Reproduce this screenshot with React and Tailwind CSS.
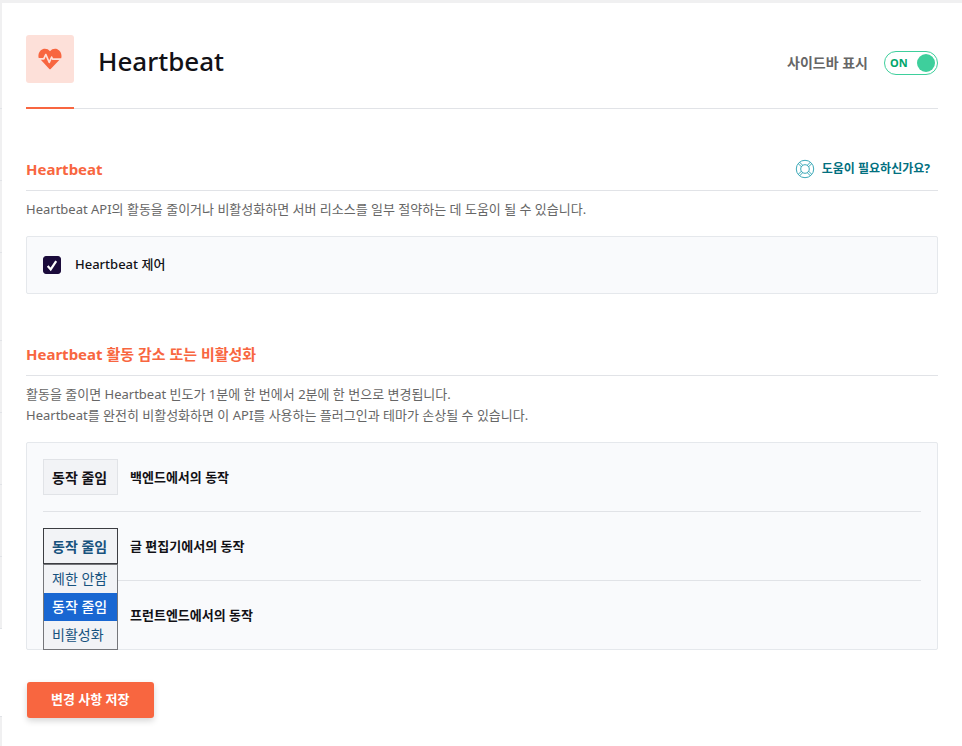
import {useState} from 'react'
import clsx from 'clsx'

const OPTIONS = ['제한 안함', '동작 줄임', '비활성화']

const BEHAVIORS = [
    {id: 'backend', label: '백엔드에서의 동작'},
    {id: 'editor', label: '글 편집기에서의 동작'},
    {id: 'frontend', label: '프런트엔드에서의 동작'},
]

function HeartbeatIcon() {
    return (
        <svg viewBox="0 0 24 22" className="h-[22px] w-6" aria-hidden="true">
            <path
                fill="#f86640"
                d="M12 3.2C10.2.9 7.2.2 4.6 1.2 1.2 2.6-.3 6.5.7 10h4.5l1.9-3.9c.3-.6 1.1-.6 1.4 0l2.7 6.1 1.8-3.5c.3-.6 1-.6 1.3 0l.8 1.6h8.1c1-3.7-.4-7.6-3.8-9.1-2.6-1-5.6-.3-7.4 2z"
            />
            <path
                fill="#f86640"
                d="M2.8 11.7h3c.4 0 .6-.2.8-.5l1.2-2.6 2.7 6.2c.3.6 1.1.6 1.4.1l1.8-3.8.4.7c.1.2.3.3.6.3h6.6L12.7 20.9c-.4.4-1 .4-1.4 0z"
            />
        </svg>
    )
}

function LifebuoyIcon() {
    return (
        <svg viewBox="0 0 20 20" className="size-5" fill="none" stroke="#3ba9b8" aria-hidden="true">
            <circle cx="10" cy="10" r="8.7"/>
            <circle cx="10" cy="10" r="4.3"/>
            <path d="M3.2 4.6l3.1 3.1M4.6 3.2l3.1 3.1M16.8 4.6l-3.1 3.1M15.4 3.2l-3.1 3.1M3.2 15.4l3.1-3.1M4.6 16.8l3.1-3.1M16.8 15.4l-3.1-3.1M15.4 16.8l-3.1-3.1"/>
        </svg>
    )
}

// Edge of the collapsed navigation, the gap is the active item
function NavEdge() {
    return (
        <div className="flex w-[2px] shrink-0 flex-col bg-white" aria-hidden="true">
            <div className="h-[106px] border-b border-[#e1e3e7] bg-[#f0f0f1]"/>
            <div className="h-[72px] border-b border-[#e1e3e7] bg-[#f0f0f1]"/>
            <div className="h-[72px] border-b border-[#e1e3e7] bg-[#f0f0f1]"/>
            <div className="h-[88px] border-b border-[#e1e3e7] bg-[#f0f0f1]"/>
            <div className="h-[72px] border-b border-[#e1e3e7] bg-[#f0f0f1]"/>
            <div className="h-[72px] border-b border-[#e1e3e7] bg-[#f0f0f1]"/>
            <div className="h-[72px] border-b border-[#e1e3e7] bg-[#f0f0f1]"/>
            <div className="h-[72px] border-b border-[#e1e3e7] bg-[#f0f0f1]"/>
            <div className="h-[87px]"/>
            <div className="grow border-t border-[#e1e3e7] bg-[#f0f0f1]"/>
        </div>
    )
}

function SectionTitle({children, action}) {
    return (
        <div className="flex h-8 items-start justify-between border-b border-[#e1e3e7]">
            <h2 className="text-[15px] leading-5 font-bold text-[#f86640]">{children}</h2>
            {action}
        </div>
    )
}

function BehaviorRow({id, label, value, open, onToggle, onChange}) {
    return (
        <div className="flex items-center gap-3 border-b border-[#e1e3e7] py-4 first:pt-0 last:border-b-0 last:pb-0">
            <div className="relative">
                <select
                    id={id}
                    value={value}
                    onMouseDown={(e) => {
                        e.preventDefault()
                        onToggle()
                    }}
                    onChange={(e) => onChange(e.target.value)}
                    className={clsx(
                        'block h-9 w-[75px] appearance-none border px-2 text-[14px] font-bold outline-none',
                        open ? 'border-[#3c3d42] bg-[#f2f3f6] text-[#17527e]' : 'border-[#e1e3e7] bg-[#f2f3f6] text-[#121116]'
                    )}
                >
                    {OPTIONS.map((option) => <option key={option}>{option}</option>)}
                </select>
                {open && (
                    <ul role="listbox" aria-label={label} className="absolute top-full left-0 z-10 w-full border border-[#75767a] bg-[#f2f3f6]">
                        {OPTIONS.map((option) => (
                            <li
                                key={option}
                                role="option"
                                aria-selected={option === value}
                                onClick={() => onChange(option)}
                                className={clsx(
                                    'h-7 px-2 text-[14px] leading-7 whitespace-nowrap',
                                    option === value ? 'bg-[#1967d2] font-medium text-white' : 'text-[#17527e]'
                                )}
                            >
                                {option}
                            </li>
                        ))}
                    </ul>
                )}
            </div>
            <label htmlFor={id} className="text-[13px] leading-5 font-bold text-[#121116]">{label}</label>
        </div>
    )
}

export default function App() {
    const [sidebar, setSidebar] = useState(true)
    const [control, setControl] = useState(true)
    const [openId, setOpenId] = useState('editor')
    const [values, setValues] = useState({backend: '동작 줄임', editor: '동작 줄임', frontend: '동작 줄임'})

    const onChange = (id, value) => {
        setValues({...values, [id]: value})
        setOpenId(null)
    }

    return (
        <div className="flex min-h-screen border-t-[3px] border-[#f0f0f1] bg-white font-['Noto_Sans','Noto_Sans_CJK_KR',sans-serif] text-[#121116]">
            <NavEdge/>
            <main className="min-w-0 grow px-6 pt-8 pb-7">
                <header className="flex items-start justify-between border-b border-[#e1e3e7]">
                    <div className="flex items-start gap-6">
                        <div className="-mb-px border-b-2 border-[#f86640] pb-6">
                            <div className="flex size-12 items-center justify-center rounded-[3px] bg-[#fde0d9]">
                                <HeartbeatIcon/>
                            </div>
                        </div>
                        <h1 className="pt-2 text-[26px] leading-9 font-medium">Heartbeat</h1>
                    </div>
                    <label className="flex cursor-pointer items-center gap-4 pt-4">
                        <span className="text-[14px] leading-6 font-bold text-[#666]">사이드바 표시</span>
                        <input
                            type="checkbox"
                            role="switch"
                            checked={sidebar}
                            onChange={(e) => setSidebar(e.target.checked)}
                            className="peer sr-only"
                        />
                        <span className="flex h-6 w-[54px] flex-row-reverse items-center justify-between rounded-full border border-[#3ecf9c] px-[2px] peer-checked:flex-row peer-checked:pl-[5px]">
                            <span className="text-[11px] font-bold text-[#00a66b]">{sidebar ? 'ON' : 'OFF'}</span>
                            <span className="size-[18px] rounded-full bg-[#3ecf9c]"/>
                        </span>
                    </label>
                </header>

                <section className="pt-[50px]">
                    <SectionTitle
                        action={
                            <a href="#help" className="flex items-center gap-[7px] pr-2 text-[12px] leading-5 font-bold text-[#02707f]">
                                <LifebuoyIcon/>
                                도움이 필요하신가요?
                            </a>
                        }
                    >
                        Heartbeat
                    </SectionTitle>
                    <p className="pt-2 text-[13px] leading-[21px] text-[#666]">
                        Heartbeat API의 활동을 줄이거나 비활성화하면 서버 리소스를 일부 절약하는 데 도움이 될 수 있습니다.
                    </p>
                    <div className="mt-4 rounded-[2px] border border-[#e5e8ec] bg-[#f9fafc] p-4">
                        <label className="flex h-6 cursor-pointer items-center gap-[14px] text-[13px] font-medium">
                            <span className="grid size-[18px] place-items-center">
                                <input
                                    type="checkbox"
                                    checked={control}
                                    onChange={(e) => setControl(e.target.checked)}
                                    className="peer col-start-1 row-start-1 size-[18px] appearance-none rounded-[3px] border border-[#1b0b3b] checked:bg-[#1b0b3b]"
                                />
                                <svg viewBox="0 0 18 18" className="pointer-events-none invisible col-start-1 row-start-1 size-[18px] peer-checked:visible" fill="none" stroke="#fff" strokeWidth="2.2" aria-hidden="true">
                                    <path d="M4.7 10l3 3.4 5.5-8.2"/>
                                </svg>
                            </span>
                            Heartbeat 제어
                        </label>
                    </div>
                </section>

                <section className="pt-[50px]">
                    <SectionTitle>Heartbeat 활동 감소 또는 비활성화</SectionTitle>
                    <p className="pt-2 text-[13px] leading-[21px] text-[#666]">
                        활동을 줄이면 Heartbeat 빈도가 1분에 한 번에서 2분에 한 번으로 변경됩니다.
                        <br/>
                        Heartbeat를 완전히 비활성화하면 이 API를 사용하는 플러그인과 테마가 손상될 수 있습니다.
                    </p>
                    <div className="mt-4 rounded-[2px] border border-[#e5e8ec] bg-[#f9fafc] p-4">
                        {BEHAVIORS.map(({id, label}) => (
                            <BehaviorRow
                                key={id}
                                id={id}
                                label={label}
                                value={values[id]}
                                open={openId === id}
                                onToggle={() => setOpenId(openId === id ? null : id)}
                                onChange={(value) => onChange(id, value)}
                            />
                        ))}
                    </div>
                </section>

                <button
                    type="submit"
                    className="mt-8 ml-px h-9 rounded-[3px] bg-[#f86640] px-6 text-[13px] font-bold text-white shadow-[0_3px_6px_rgba(0,0,0,0.16)]"
                >
                    변경 사항 저장
                </button>
            </main>
        </div>
    )
}
